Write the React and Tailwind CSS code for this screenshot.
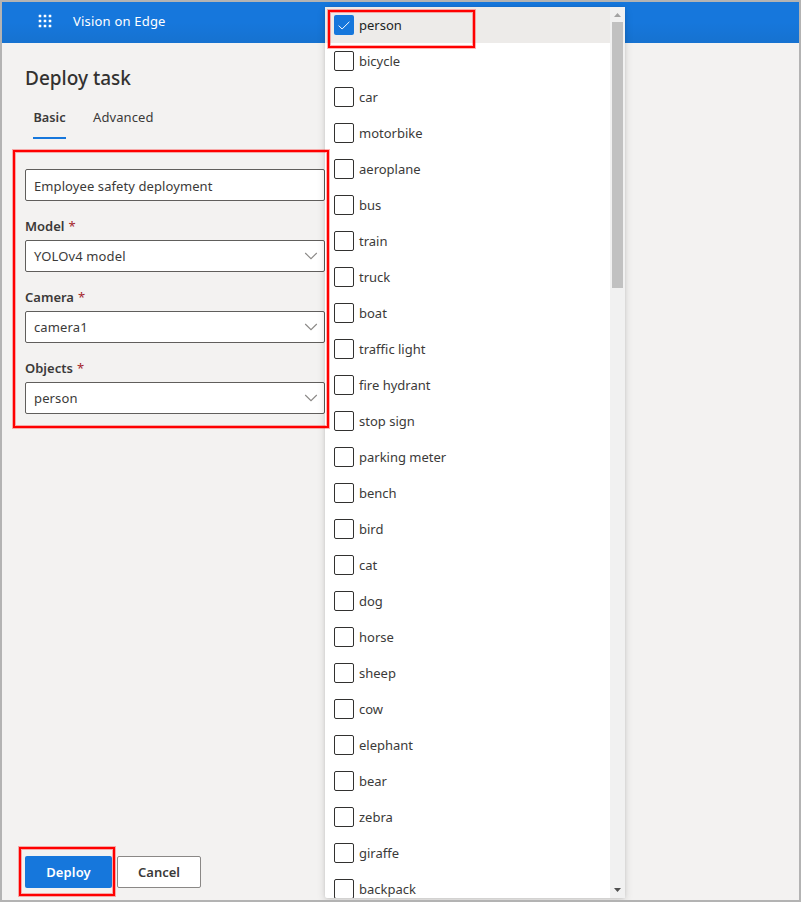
import React from "react";

const objects = [
  "person", "bicycle", "car", "motorbike", "aeroplane", "bus", "train", "truck", "boat",
  "traffic light", "fire hydrant", "stop sign", "parking meter", "bench", "bird", "cat",
  "dog", "horse", "sheep", "cow", "elephant", "bear", "zebra", "giraffe", "backpack",
];

function Waffle() {
  return (
    <svg width="14" height="14" viewBox="0 0 14 14" fill="#fff">
      {[0, 5, 10].map((y) =>
        [0, 5, 10].map((x) => <rect key={`${x}-${y}`} x={x + 0.7} y={y + 0.7} width="2.6" height="2.6" rx="0.3" />)
      )}
    </svg>
  );
}

function Chevron() {
  return (
    <svg width="14" height="8" viewBox="0 0 14 8" fill="none" stroke="#8a8886" strokeWidth="1.1">
      <path d="M1.2 1 L7 6.7 L12.8 1" />
    </svg>
  );
}

function Select({ label, value }) {
  return (
    <div className="mt-[14px]">
      <div className="flex h-[25px] items-center pb-[3px] text-[13px] font-semibold">
        {label}
        <span className="ml-1 font-normal text-[#a4262c]">*</span>
      </div>
      <div className="flex h-8 items-center justify-between rounded-[2px] border border-[#605e5c] bg-white pr-[6px] pl-2">
        <span className="tracking-[0.13px]">{value}</span>
        <Chevron />
      </div>
    </div>
  );
}

function Option({ name, checked }) {
  return (
    <div className={checked ? "flex h-9 items-center bg-[#edebe9] pl-[9px] text-[#201f1e]" : "flex h-9 items-center pl-[9px]"}>
      <span
        className={
          checked
            ? "flex size-5 items-center justify-center rounded-[2px] bg-[#1677dc]"
            : "size-5 rounded-[2px] border border-[#323130] bg-white"
        }
      >
        {checked && (
          <svg width="12" height="9" viewBox="0 0 12 9" fill="none" stroke="#fff" strokeWidth="1">
            <path d="M0.7 4.6 L4.1 8 L11.4 0.8" />
          </svg>
        )}
      </span>
      <span className="ml-[5px] whitespace-nowrap">{name}</span>
    </div>
  );
}

export default function App() {
  return (
    <div className="relative flex h-[902px] w-[801px] flex-col overflow-hidden border-2 border-[#b3b3b3] bg-[#f3f2f1] font-['Noto_Sans','Open_Sans',sans-serif] text-[13px] leading-5 text-[#3b3a39]">
      <header className="flex h-[41px] shrink-0 items-center bg-linear-to-b from-[#1677dc] from-50% to-[#1672d0] pb-[3px] pl-[36px] text-white">
        <Waffle />
        <span className="ml-[21px] tracking-[0.2px]">Vision on Edge</span>
      </header>
      <main className="flex grow flex-col items-start pl-[23px]">
        <h1 className="mt-[21px] text-[19px] leading-7 font-medium text-[#323130]">Deploy task</h1>
        <nav className="mt-[4px] flex h-[43px] gap-[27px] pl-2">
          <div className="flex w-[33px] items-center justify-center border-b-2 border-[#1677dc] pt-px text-[12.7px] font-semibold">Basic</div>
          <div className="flex items-center border-b-2 border-transparent pt-px tracking-[0.1px]">Advanced</div>
        </nav>
        <section className="mt-[30px] w-[300px]">
          <div className="flex h-8 items-center rounded-[2px] border border-[#605e5c] bg-white pt-[2px] pl-2 tracking-[0.09px]">
            Employee safety deployment
          </div>
          <Select label="Model" value="YOLOv4 model" />
          <Select label="Camera" value="camera1" />
          <Select label="Objects" value="person" />
        </section>
        <footer className="mt-auto mb-[12px] flex gap-[5px] font-semibold">
          <button className="h-8 w-[87px] rounded-[2px] bg-[#1677dc] tracking-[0.15px] text-white">Deploy</button>
          <button className="h-8 w-[84px] rounded-[2px] border border-[#8a8886] bg-white">Cancel</button>
        </footer>
      </main>

      <div className="absolute top-[5px] left-[323px] flex h-[891px] w-[300px] rounded-[2px] bg-white shadow-[0_3px_8px_rgba(0,0,0,0.14),0_0_3px_rgba(0,0,0,0.1)]">
        <div className="h-full grow overflow-hidden">
          {objects.map((name) => (
            <Option key={name} name={name} checked={name === "person"} />
          ))}
        </div>
        <div className="flex w-[15px] flex-col items-center bg-[#f1f1f1]">
          <svg className="mt-[6px] mb-[5px] shrink-0" width="7" height="4" viewBox="0 0 7 4">
            <path d="M3.5 0 L7 4 H0 Z" fill="#a3a3a3" />
          </svg>
          <div className="h-[266px] w-[11px] bg-[#c1c1c1]" />
          <svg className="mt-auto mb-[6px]" width="7" height="4" viewBox="0 0 7 4">
            <path d="M0 0 H7 L3.5 4 Z" fill="#505050" />
          </svg>
        </div>
      </div>

      <div className="absolute top-[148px] left-[11px] h-[278px] w-[316px] border-2 border-[#ff0000] shadow-[0_0_0_1px_rgba(255,0,0,0.3),inset_0_0_0_1px_rgba(255,0,0,0.3)]" />
      <div className="absolute top-[8px] left-[326px] h-[38px] w-[147px] border-2 border-[#ff0000] shadow-[0_0_0_1px_rgba(255,0,0,0.3),inset_0_0_0_1px_rgba(255,0,0,0.3)]" />
      <div className="absolute top-[845px] left-[17px] h-[49px] w-[96px] border-2 border-[#ff0000] shadow-[0_0_0_1px_rgba(255,0,0,0.3),inset_0_0_0_1px_rgba(255,0,0,0.3)]" />
    </div>
  );
}
